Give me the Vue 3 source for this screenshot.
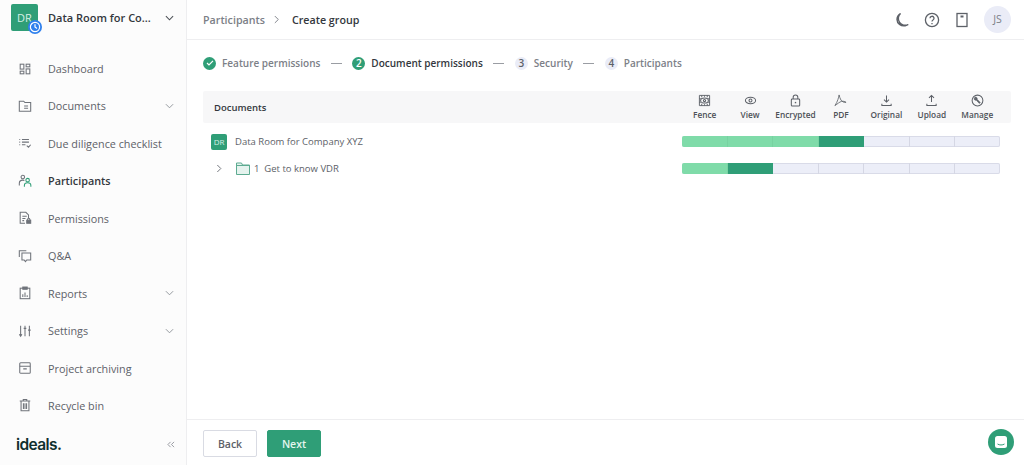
<script setup>
const navItems = [
    { name: "Dashboard", icon: "dash" },
    { name: "Documents", icon: "docs", arrow: true },
    { name: "Due diligence checklist", icon: "check" },
    { name: "Participants", icon: "people", active: true },
    { name: "Permissions", icon: "perm" },
    { name: "Q&A", icon: "qa" },
    { name: "Reports", icon: "report", arrow: true },
    { name: "Settings", icon: "settings", arrow: true },
    { name: "Project archiving", icon: "archive" },
    { name: "Recycle bin", icon: "bin" },
];
const columns = ["Fence", "View", "Encrypted", "PDF", "Original", "Upload", "Manage"];
const rows = [
    { light: 3, dark: 1 },
    { light: 1, dark: 1 },
];

function cellClass(row, index) {
    if (index < row.light) return "cell light";
    if (index < row.light + row.dark) return "cell dark";
    return "cell";
}
</script>
<template>
    <div class="page">
        <aside class="sidebar">
            <div class="project">
                <div class="project_logo">
                    DR
                    <span class="clock">
                        <svg width="12" height="12" viewBox="0 0 12 12" fill="none" stroke="#fff" stroke-width="1.2">
                            <circle cx="6" cy="6" r="4.6" />
                            <path d="M6 3.2V6l2 1.4" />
                        </svg>
                    </span>
                </div>
                <div class="project_name">Data Room for Co...</div>
                <svg class="arrow dark_arrow" width="9" height="6" viewBox="0 0 10 6" fill="none" stroke="currentColor" stroke-width="1.2"><path d="M1 1l4 4 4-4" /></svg>
            </div>
            <nav class="nav">
                <div v-for="item in navItems" :key="item.name" class="nav_item" :class="{ active: item.active }">
                    <svg class="nav_icon" width="14" height="14" viewBox="0 0 16 16" fill="none" stroke="#6f737a" stroke-width="1.2">
                        <template v-if="item.icon == 'dash'">
                            <rect x="2.5" y="2.5" width="4.2" height="5.6" />
                            <rect x="9.3" y="2.5" width="4.2" height="3" />
                            <rect x="2.5" y="10.5" width="4.2" height="3" />
                            <rect x="9.3" y="7.9" width="4.2" height="5.6" />
                        </template>
                        <template v-if="item.icon == 'docs'">
                            <path d="M1.5 2.5h5l1.4 1.6h6.6v10h-13z" />
                            <path d="M7 8h4.5M7 10.5h4.5" />
                        </template>
                        <template v-if="item.icon == 'check'">
                            <path d="M1.5 4h1M4.5 4h8M1.5 7h1M4.5 7h8M1.5 10h1M4.5 10h4M10 11l2 1.8L14.5 10" />
                        </template>
                        <template v-if="item.icon == 'people'">
                            <circle cx="5.5" cy="3.5" r="2" />
                            <path d="M1.5 13v-2.5C1.5 8 3.5 7 5.5 7c.8 0 1.3.2 1.8.4" />
                            <circle cx="11" cy="7" r="2" stroke="#2f9e77" />
                            <path d="M7.3 14.5V13c0-1.9 1.7-3 3.7-3s3.7 1.1 3.7 3v1.5" stroke="#2f9e77" />
                        </template>
                        <template v-if="item.icon == 'perm'">
                            <path d="M8 14H2.5V1.5h6.5l3 3V8" />
                            <path d="M5 6h5M5 8.5h3.5M5 11h2" />
                            <rect x="10" y="10.5" width="4.5" height="3.5" fill="#6f737a" />
                            <path d="M11 10.5v-1a1.2 1.2 0 0 1 2.5 0v1" />
                        </template>
                        <template v-if="item.icon == 'qa'">
                            <path d="M1.5 9V2h8" />
                            <path d="M4.5 4.5h10v8H10l-1.500 2L7 12.5H4.500z" />
                        </template>
                        <template v-if="item.icon == 'report'">
                            <rect x="2.5" y="2.5" width="11" height="12" />
                            <rect x="5.5" y="1.2" width="5" height="2.5" fill="#6f737a" />
                            <path d="M5.5 12.5v-3M8 12.5v-5M10.5 12.5v-2" />
                        </template>
                        <template v-if="item.icon == 'settings'">
                            <path d="M3 2v12M1.5 11.8L3 14l1.500-2.200M8 2v12M6.5 5h3M13 2v12M11.5 7h3" />
                        </template>
                        <template v-if="item.icon == 'archive'">
                            <rect x="2" y="2" width="12" height="12" rx="1" />
                            <path d="M2 6h12M6 9h4" />
                        </template>
                        <template v-if="item.icon == 'bin'">
                            <path d="M2 3.5h12M6 3.5V1.800h4v1.700M3.5 3.500v11h9v-11M6.200 6v6.500M8 6v6.500M9.800 6v6.500" />
                        </template>
                    </svg>
                    <span class="nav_text">{{ item.name }}</span>
                    <svg v-if="item.arrow" class="arrow" width="9" height="6" viewBox="0 0 10 6" fill="none" stroke="currentColor" stroke-width="1"><path d="M1 1l4 4 4-4" /></svg>
                </div>
            </nav>
            <div class="side_bottom">
                <span class="logo">ideals.</span>
                <span class="collapse">
                    <svg width="8" height="7" viewBox="0 0 9 8" fill="none" stroke="#8a8e95" stroke-width="1"><path d="M4 1L1 4l3 3M8 1L5 4l3 3" /></svg>
                </span>
            </div>
        </aside>
        <main class="main">
            <header class="topbar">
                <div class="crumbs">
                    <span>Participants</span>
                    <svg width="6" height="9" viewBox="0 0 7 10" fill="none" stroke="#7c8087" stroke-width="1.1"><path d="M1 1l4 4-4 4" /></svg>
                    <span class="crumb_now">Create group</span>
                </div>
                <div class="top_icons">
                    <svg width="16" height="16" viewBox="0 0 16 16" fill="none" stroke="#5d6168" stroke-width="1.4"><path d="M6.5 1.5a6.800 6.800 0 0 0 7.800 11 6.800 6.800 0 0 1-3 1.200C7 14.500 3 11.500 3 7.500 3 5 4.500 2.700 6.500 1.500z" /></svg>
                    <svg width="16" height="16" viewBox="0 0 16 16" fill="none" stroke="#5d6168" stroke-width="1.3"><circle cx="8" cy="8" r="6.6" /><path d="M6 6.300a2 2 0 1 1 3 1.700c-.7.400-1 .8-1 1.500" /><path d="M8 11v1.200" /></svg>
                    <svg width="16" height="16" viewBox="0 0 16 16" fill="none" stroke="#5d6168" stroke-width="1.3"><rect x="3" y="1.5" width="10" height="13" /><path d="M6.500 4.500h3" stroke-width="2" /></svg>
                    <div class="avatar">JS</div>
                </div>
            </header>
            <section class="content">
                <div class="steps">
                    <div class="step">
                        <span class="step_num done">
                            <svg width="8" height="6" viewBox="0 0 9 7" fill="none" stroke="#fff" stroke-width="1.4"><path d="M1 3.500l2.300 2.300L8 1" /></svg>
                        </span>
                        <span>Feature permissions</span>
                    </div>
                    <span class="dash"></span>
                    <div class="step current">
                        <span class="step_num done">2</span>
                        <span>Document permissions</span>
                    </div>
                    <span class="dash"></span>
                    <div class="step">
                        <span class="step_num">3</span>
                        <span>Security</span>
                    </div>
                    <span class="dash"></span>
                    <div class="step">
                        <span class="step_num">4</span>
                        <span>Participants</span>
                    </div>
                </div>
                <div class="table_head">
                    <div class="head_title">Documents</div>
                    <div class="head_cols">
                        <div v-for="col in columns" :key="col" class="head_col">
                            <svg width="13" height="13" viewBox="0 0 14 14" fill="none" stroke="#5d6168" stroke-width="1.1">
                                <template v-if="col == 'Fence'">
                                    <path d="M1.5 1.5h11v11h-11zM4 1.500v2M7 1.500V3M10 1.500v2M4 10.500v2M7 11v1.500M10 10.500v2M1.500 5H3M1.500 9H3M11 5h1.500M11 9h1.500" stroke-width="1" />
                                    <ellipse cx="7" cy="7" rx="4.2" ry="2.8" />
                                    <circle cx="7" cy="7" r="1.2" />
                                </template>
                                <template v-if="col == 'View'">
                                    <ellipse cx="7" cy="7" rx="5.5" ry="3.5" />
                                    <circle cx="7" cy="7" r="1.6" />
                                </template>
                                <template v-if="col == 'Encrypted'">
                                    <rect x="2.5" y="5.5" width="9" height="7.5" rx="1" />
                                    <path d="M4.500 5.500v-2a2.500 2.500 0 0 1 5 0v2" />
                                    <path d="M7 8.500V10" stroke-width="1.5" />
                                </template>
                                <template v-if="col == 'PDF'">
                                    <path d="M5.500 1c-.6 3-1.500 7-4.500 11.500 3-2 5-4 7-4.500 2-.5 4 0 5 1-2 .5-4-.5-5.500-2.500C6.500 5 6 3 5.500 1z" stroke-width=".9" />
                                </template>
                                <template v-if="col == 'Original'">
                                    <path d="M7 1.500v7M4.300 6L7 8.700 9.700 6M2 10.500v2h10v-2" />
                                </template>
                                <template v-if="col == 'Upload'">
                                    <path d="M7 8.700v-7M4.300 4.200L7 1.500l2.700 2.700M2 10.500v2h10v-2" />
                                </template>
                                <template v-if="col == 'Manage'">
                                    <circle cx="7" cy="7" r="5.8" />
                                    <path d="M4 3.500a1.800 1.800 0 0 1 2.600 2.200L10 9.200l-1 1-3.300-3.500a1.800 1.800 0 0 1-2.200-2.500l1.200 1z" fill="#5d6168" stroke-width=".6" />
                                </template>
                            </svg>
                            <span>{{ col }}</span>
                        </div>
                    </div>
                </div>
                <div class="row">
                    <div class="row_name">
                        <span class="doc_logo">DR</span>
                        <span>Data Room for Company XYZ</span>
                    </div>
                    <div class="bar">
                        <div v-for="(col, i) in columns" :key="col" :class="cellClass(rows[0], i)"></div>
                    </div>
                </div>
                <div class="row">
                    <div class="row_name folder_row">
                        <svg width="7" height="9" viewBox="0 0 8 10" fill="none" stroke="#6f737a" stroke-width="1.1"><path d="M1.500 1l4 4-4 4" /></svg>
                        <svg class="folder" width="14" height="13" viewBox="0 0 14 13" fill="#e5f3ee" stroke="#5dab91" stroke-width="1"><path d="M.5 1h5l1 2h7v9.500H.5z" /><path d="M.5 3.500h13" /></svg>
                        <span class="folder_name">1&nbsp;&nbsp;Get to know VDR</span>
                    </div>
                    <div class="bar">
                        <div v-for="(col, i) in columns" :key="col" :class="cellClass(rows[1], i)"></div>
                    </div>
                </div>
            </section>
            <footer class="footer">
                <button class="btn">Back</button>
                <button class="btn primary">Next</button>
            </footer>
        </main>
        <div class="chat">
            <svg width="12" height="12" viewBox="0 0 12 12"><rect x="0" y="0" width="12" height="12" rx="2.5" fill="#fff" /><path d="M2.500 8c2 1.300 5 1.300 7 0" fill="none" stroke="#2f9e77" stroke-width="1" /></svg>
        </div>
    </div>
</template>
<style scoped>
.page {
    display: flex;
    height: 465px;
    width: 1024px;
    overflow: hidden;
    font-family: "Open Sans", sans-serif;
    font-size: 10.8px;
    color: #5d6168;
    background: #fff;
}

.sidebar {
    width: 187px;
    flex-shrink: 0;
    display: flex;
    flex-direction: column;
    box-sizing: border-box;
    background: #fcfcfc;
    border-right: 1px solid #eeeef0;
}

.project {
    display: flex;
    align-items: center;
    height: 38px;
    padding: 0 12px 0 11px;
}
.project_logo {
    position: relative;
    width: 27px;
    height: 27px;
    flex-shrink: 0;
    border-radius: 2px;
    background: #2f9e77;
    color: #d6efe6;
    font-size: 11px;
    line-height: 27px;
    text-align: center;
}
.clock {
    position: absolute;
    right: -4px;
    bottom: -3px;
    width: 14px;
    height: 14px;
    border-radius: 50%;
    background: #2f80ed;
    display: flex;
    align-items: center;
    justify-content: center;
}
.project_name {
    margin-left: 10px;
    flex: 1;
    font-size: 11px;
    font-weight: 600;
    color: #33373d;
    white-space: nowrap;
}
.arrow {
    color: #8a8e95;
    flex-shrink: 0;
}
.dark_arrow {
    color: #4d5157;
}

.nav {
    margin-top: 14.5px;
    display: flex;
    flex-direction: column;
}
.nav_item {
    display: flex;
    align-items: center;
    height: 37.45px;
    padding: 0 12px 0 18px;
    flex-shrink: 0;
}
.nav_icon {
    flex-shrink: 0;
}
.nav_text {
    margin-left: 16px;
    flex: 1;
    white-space: nowrap;
}
.active .nav_text {
    font-weight: 600;
    color: #33373d;
}

.side_bottom {
    margin-top: auto;
    height: 44px;
    display: flex;
    align-items: center;
    justify-content: space-between;
    padding: 0 11px 0 16px;
}
.logo {
    font-family: "Inter", sans-serif;
    font-size: 15.5px;
    font-weight: 600;
    letter-spacing: -0.6px;
    color: #10302e;
}
.collapse {
    display: flex;
}

.main {
    flex: 1;
    display: flex;
    flex-direction: column;
    min-width: 0;
}

.topbar {
    height: 40px;
    flex-shrink: 0;
    box-sizing: border-box;
    border-bottom: 1px solid #eeeef0;
    display: flex;
    align-items: center;
    justify-content: space-between;
    padding: 0 13px 0 16px;
}
.crumbs {
    display: flex;
    align-items: center;
    gap: 8px;
    font-size: 10.7px;
    font-weight: 600;
    color: #7c8087;
}
.crumbs svg {
    margin: 0 1px;
}
.crumb_now {
    margin-left: 3px;
    color: #33373d;
}
.top_icons {
    display: flex;
    align-items: center;
    gap: 14px;
}
.avatar {
    width: 27px;
    height: 27px;
    border-radius: 50%;
    background: #eaecf7;
    color: #7c8087;
    font-size: 10.5px;
    line-height: 27px;
    text-align: center;
}

.content {
    flex: 1;
    padding: 0 13px 0 16px;
}
.steps {
    display: flex;
    align-items: center;
    height: 46px;
}
.step {
    display: flex;
    align-items: center;
    gap: 6px;
    font-size: 10px;
    font-weight: 600;
    color: #7c8087;
    white-space: nowrap;
}
.step.current {
    color: #33373d;
}
.step_num {
    width: 13px;
    height: 13px;
    border-radius: 50%;
    background: #eaecf7;
    color: #5d6168;
    font-size: 10px;
    display: flex;
    align-items: center;
    justify-content: center;
}
.step_num.done {
    background: #2f9e77;
    color: #fff;
}
.dash {
    width: 11px;
    height: 1px;
    margin: 0 10.5px;
    background: #9a9da3;
}

.table_head {
    margin-top: 5px;
    height: 32px;
    display: flex;
    align-items: center;
    justify-content: space-between;
    background: #f7f7f8;
    border-radius: 2px;
}
.head_title {
    margin-left: 11px;
    font-size: 9.5px;
    font-weight: 600;
    color: #33373d;
}
.head_cols {
    display: flex;
    margin-right: 11px;
    width: 318px;
}
.head_col {
    flex: 1;
    min-width: 0;
    display: flex;
    flex-direction: column;
    align-items: center;
    gap: 2px;
    font-size: 8.3px;
    font-weight: 600;
    color: #4d5157;
    white-space: nowrap;
}

.row {
    height: 27px;
    display: flex;
    align-items: center;
    justify-content: space-between;
}
.table_head + .row {
    margin-top: 5px;
}
.row_name {
    display: flex;
    align-items: center;
    margin-left: 8px;
    font-size: 9.5px;
    color: #5d6168;
    white-space: nowrap;
}
.doc_logo {
    width: 16px;
    height: 16px;
    margin-right: 8px;
    border-radius: 2px;
    background: #2f9e77;
    color: #d6efe6;
    font-size: 8px;
    line-height: 16px;
    text-align: center;
}
.folder_row {
    margin-left: 13px;
}
.folder {
    margin-left: 13px;
}
.folder_name {
    margin-left: 4px;
}
.bar {
    display: flex;
    width: 318px;
    height: 11px;
    margin-right: 11px;
    box-sizing: border-box;
    border-radius: 2px;
    overflow: hidden;
    background: #eceef8;
    box-shadow: inset 0 0 0 1px #d9dbe8;
}
.cell {
    flex: 1;
    box-sizing: border-box;
    border-right: 1px solid #d5d7e4;
}
.cell:last-child {
    border-right: none;
}
.cell.light {
    background: #7fdba9;
    border-right-color: #78d2a1;
}
.cell.dark {
    background: #2f9e77;
    border-right-color: #2f9e77;
}

.footer {
    height: 46px;
    flex-shrink: 0;
    box-sizing: border-box;
    border-top: 1px solid #eeeef0;
    display: flex;
    align-items: center;
    gap: 10px;
    padding: 2px 16px 0;
}
.btn {
    width: 54px;
    height: 27px;
    border: 1px solid #d9dbe3;
    border-radius: 2px;
    background: #fff;
    color: #5d6168;
    font-family: inherit;
    font-size: 10.5px;
    font-weight: 600;
}
.btn.primary {
    background: #2f9e77;
    border-color: #2f9e77;
    color: #e4f5ee;
}

.chat {
    position: absolute;
    left: 988px;
    top: 429px;
    width: 26px;
    height: 26px;
    border-radius: 50%;
    background: #2f9e77;
    display: flex;
    align-items: center;
    justify-content: center;
}
</style>
